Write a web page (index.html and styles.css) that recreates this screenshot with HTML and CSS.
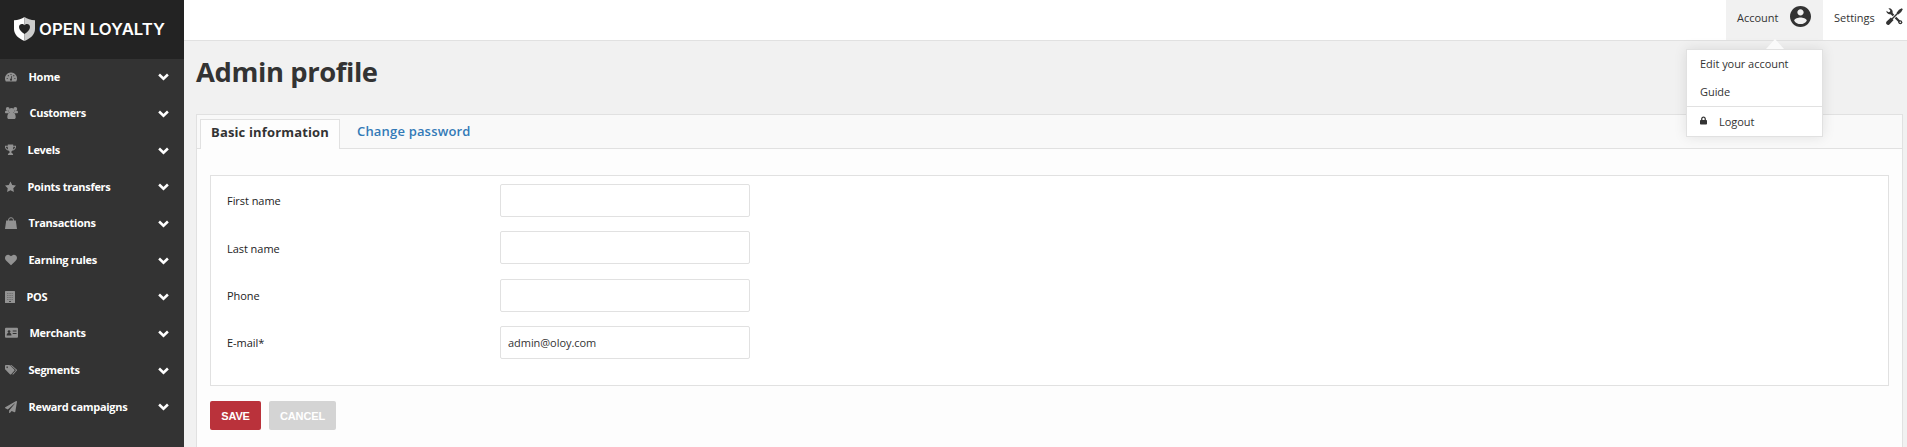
FILE: index.html
```html
<!DOCTYPE html>
<html lang="en">
<head>
<meta charset="utf-8">
<title>Open Loyalty</title>
<link rel="stylesheet" href="styles.css">
</head>
<body>
<svg class="defs" width="0" height="0">
  <symbol id="chev" viewBox="0 0 10 7"><path d="M1 1.2 5 5.1 9 1.2" fill="none" stroke="#fff" stroke-width="2.3"/></symbol>
</svg>
<div class="app">
  <aside class="sidebar">
    <div class="brand">
      <svg class="shield" viewBox="0 0 21 24"><path d="M10.5 0C8 2 4 3 0 3.200V12c0 5.500 4.500 9.500 10.500 12z" fill="#fff"/><path d="M10.500 0C13 2 17 3 21 3.200V12c0 5.500-4.500 9.500-10.500 12z" fill="#ccc"/><path d="M10.500 17C7.500 14.800 5 12.600 5 9.900 5 6.700 8.900 5.900 10.500 8.300c1.600-2.400 5.500-1.600 5.500 1.600 0 2.700-2.500 4.900-5.500 7.100z" fill="#232323"/></svg>
      <svg class="wordmark" viewBox="0 0 130 22"><text x="0" y="17" textLength="126" lengthAdjust="spacingAndGlyphs">OPEN LOYALTY</text></svg>
    </div>
    <nav class="nav">
      <a class="item"><svg class="ico w12" viewBox="0 0 12 10"><path d="M6 .5a6 6 0 0 0-5.200 9h10.400A6 6 0 0 0 6 .5z"/><g fill="#333"><circle cx="2.200" cy="6.500" r=".6"/><circle cx="3.300" cy="3.700" r=".6"/><circle cx="6" cy="2.500" r=".6"/><circle cx="8.800" cy="3.700" r=".6"/><circle cx="9.900" cy="6.500" r=".6"/><circle cx="6" cy="7.700" r="1"/><path d="M5.500 7.500 6.500 3.800l.6.200-.6 3.800z"/></g></svg><span>Home</span><svg class="chev"><use href="#chev"/></svg></a>
      <a class="item"><svg class="ico w13" viewBox="0 0 13 12"><circle cx="2.700" cy="2" r="1.900"/><circle cx="10.300" cy="2" r="1.900"/><circle cx="6.500" cy="3.700" r="2.700"/><path d="M0 5.200C0 4 .8 3.600 1.700 3.900c.8.300 1.500.2 2-.1 0 1 .1 1.600.7 2.400H.9C.4 6.200 0 5.900 0 5.200zM13 5.200c0-1.200-.8-1.600-1.700-1.300-.8.300-1.500.2-2-.1 0 1-.1 1.600-.7 2.400h3.500c.5 0 .9-.3.900-1zM2.300 10.200c0-2 .6-3.800 2-4.200h4.400c1.400.4 2 2.200 2 4.200 0 1-.6 1.800-1.600 1.800H3.900c-1 0-1.600-.8-1.600-1.800z"/></svg><span>Customers</span><svg class="chev"><use href="#chev"/></svg></a>
      <a class="item"><svg class="ico w11" viewBox="0 0 11 11"><path fill-rule="evenodd" d="M2.800 0h5.400v1.300H11v1.200c0 1.700-1.700 3.300-3.500 3.600-.6.700-1.200.9-1.200 1.600 0 .8 1.800.8 1.800 2.300v.5H2.900V10c0-1.500 1.800-1.500 1.800-2.300 0-.7-.6-.9-1.200-1.600C1.700 5.800 0 4.200 0 2.500V1.300h2.800zM.9 2.200c0 1.200.9 2.200 2.200 2.700-.3-.8-.4-1.700-.4-2.700zm9.200 0H8.300c0 1-.1 1.900-.4 2.700 1.300-.5 2.200-1.500 2.200-2.700z"/></svg><span>Levels</span><svg class="chev"><use href="#chev"/></svg></a>
      <a class="item"><svg class="ico w11" viewBox="0 0 11 11"><path d="M5.500 0 7.200 3.500l3.800.6-2.700 2.700.6 3.800-3.400-1.800-3.400 1.800.6-3.800L0 4.100l3.800-.6z"/></svg><span>Points transfers</span><svg class="chev"><use href="#chev"/></svg></a>
      <a class="item"><svg class="ico w12" viewBox="0 0 12 12"><path d="M1.200 3.500h9.600L12 12H0z"/><path d="M3.500 5.500V3.200a2.500 2.500 0 0 1 5 0v2.300" fill="none" stroke="#929292" stroke-width="1"/></svg><span>Transactions</span><svg class="chev"><use href="#chev"/></svg></a>
      <a class="item"><svg class="ico w12" viewBox="0 128 1792 1536"><path d="M896 1664q-26 0-44-18l-624-602q-10-8-27.500-26t-55.500-65.500-68-97.500-53.500-121-23.500-138q0-220 127-344t351-124q62 0 126.500 21.500t120 58 95.500 68.500 76 68q36-36 76-68t95.500-68.500 120-58 126.500-21.500q224 0 351 124t127 344q0 221-229 450l-623 600q-18 18-44 18z"/></svg><span>Earning rules</span><svg class="chev"><use href="#chev"/></svg></a>
      <a class="item"><svg class="ico w10" viewBox="0 0 10 12"><path d="M.5 0h9q.5 0 .5.500v11q0 .5-.5.500h-9Q0 12 0 11.500V.5Q0 0 .5 0z"/><path d="M2 2.500h6M2 4.500h6M2 6.500h6M2 8.500h6" stroke="#5a5a5a" stroke-width=".6" stroke-dasharray="1.100 .5"/><path d="M4 9.900h2V11H4z" fill="#444"/></svg><span>POS</span><svg class="chev"><use href="#chev"/></svg></a>
      <a class="item"><svg class="ico w13" viewBox="0 0 13.500 11"><rect width="13.500" height="10.500" rx="1"/><g fill="#333"><circle cx="4.200" cy="4" r="1.400"/><path d="M1.700 8c0-1.600.8-2.700 2.500-2.700S6.700 6.400 6.700 8z"/><path d="M8 3h4v1H8zM8 5.500h4v1H8z"/></g></svg><span>Merchants</span><svg class="chev"><use href="#chev"/></svg></a>
      <a class="item"><svg class="ico w12" viewBox="0 0 12.500 11"><path fill-rule="evenodd" d="M0 1.200Q0 .3.900.3h3.300c.5 0 1.100.3 1.500.7l4 4c.5.500.5.900 0 1.400L6.500 9.800c-.5.500-.9.500-1.400 0l-4.300-4.200C.3 5.200 0 4.600 0 4.100zm2.200.6a.8.800 0 1 0 .1 0z"/><path d="M5.300.3h.8c.5 0 1.100.3 1.500.7l4.500 4c.5.500.5.900 0 1.400L8.900 9.800c-.4.400-.8.500-1.300.1l3-3c.7-.7.700-1.500 0-2.200z"/></svg><span>Segments</span><svg class="chev"><use href="#chev"/></svg></a>
      <a class="item"><svg class="ico w12" viewBox="0 0 512 512"><path d="M476 3.200L12.500 270.600c-18.100 10.400-15.800 35.600 2.200 43.200L121 358.400l287.300-253.200c5.500-4.900 13.300 2.600 8.600 8.300L176 407v80.500c0 23.600 28.500 32.900 42.500 15.800L282 426l124.600 52.200c14.200 6 30.400-2.900 33-18.200l72-432C515 7.800 493.300-6.800 476 3.200z"/></svg><span>Reward campaigns</span><svg class="chev"><use href="#chev"/></svg></a>
    </nav>
  </aside>
  <div class="main">
    <header class="topbar">
      <div class="account"><span>Account</span>
        <svg class="avatar" viewBox="2 2 20 20"><path d="M12 2C6.480 2 2 6.480 2 12s4.480 10 10 10 10-4.480 10-10S17.520 2 12 2zm0 3c1.660 0 3 1.340 3 3s-1.340 3-3 3-3-1.340-3-3 1.340-3 3-3zm0 14.200c-2.500 0-4.710-1.280-6-3.220.03-1.990 4-3.080 6-3.080 1.990 0 5.970 1.090 6 3.080-1.290 1.940-3.500 3.220-6 3.220z"/></svg>
        <div class="menu">
          <svg class="arrow" viewBox="0 0 18 10"><path d="M0 10 9 0l9 10z"/></svg>
          <a>Edit your account</a>
          <a>Guide</a>
          <a class="logout"><svg class="lock" viewBox="0 0 448 512"><path d="M400 224h-24v-72C376 68.200 307.800 0 224 0S72 68.200 72 152v72H48c-26.500 0-48 21.500-48 48v192c0 26.500 21.500 48 48 48h352c26.500 0 48-21.500 48-48V272c0-26.500-21.500-48-48-48zm-104 0H152v-72c0-39.700 32.300-72 72-72s72 32.300 72 72v72z"/></svg>Logout</a>
        </div>
      </div>
      <div class="settings"><span>Settings</span>
        <svg class="tools" viewBox="0 0 17 17"><path d="M4.500 4.500 14.200 14.200" stroke="#333" stroke-width="2.300" stroke-linecap="round"/><path d="M2.400.3A3.700 3.700 0 0 1 6.300 5.500 3.700 3.700 0 0 1 .3 2.700L2.500 4.300 4.100 3.900 4.300 2.400z" fill="#333"/><circle cx="14.300" cy="14.300" r="2" fill="#333"/><circle cx="14.300" cy="14.300" r=".8" fill="#fff"/><path d="M12.500 4.500 6 11" stroke="#fff" stroke-width="3"/><path d="M12.500 4.500 6 11" stroke="#333" stroke-width="1.500"/><path d="M10.600 4.700 13 1.800 15.800.2 16.800 1.200 15.200 4 12.300 6.400zM4.900 9.400 7.600 12.100 3.400 16.400Q1.900 17.500.7 16.300T.6 13.600z" fill="#333"/></svg>
      </div>
    </header>
    <main class="content">
      <h1>Admin profile</h1>
      <section class="panel">
        <div class="tabs"><a class="tab active">Basic information</a><a class="tab link">Change password</a></div>
        <div class="body">
          <div class="fields">
            <label class="row"><span>First name</span><input type="text"></label>
            <label class="row"><span>Last name</span><input type="text"></label>
            <label class="row"><span>Phone</span><input type="text"></label>
            <label class="row"><span>E-mail*</span><input type="text" value="admin@oloy.com"></label>
          </div>
          <div class="actions"><button class="save">SAVE</button><button class="cancel">CANCEL</button></div>
        </div>
      </section>
    </main>
  </div>
</div>
</body>
</html>
```
FILE: styles.css
```css
* { box-sizing: border-box; }
body { margin: 0; height: 447px; overflow: hidden; background: #f1f1f1; color: #333; font: 11px/16px "Open Sans", sans-serif; }
.defs { position: absolute; }
.app { display: flex; height: 447px; }
.sidebar { width: 184px; flex: none; background: #333; }
.brand { height: 59px; background: #232323; display: flex; align-items: center; padding: 0 0 1px 14px; }
.shield { width: 21px; height: 24px; }
.wordmark { width: 130px; height: 22px; margin-left: 4px; }
.wordmark text { font: 600 16px Inter, sans-serif; fill: #fff; }
.nav { display: flex; flex-direction: column; }
.item { height: 36.67px; display: flex; align-items: center; padding: 0 15px 1px 5px; color: #fff; font-weight: 700; }
.item span { margin-left: 11.5px; flex: 1; letter-spacing: -.3px; }
.ico { height: 12px; fill: #929292; }
.w10 { width: 10px; } .w11 { width: 11px; } .w12 { width: 12px; } .w13 { width: 13px; }
.chev { width: 11px; height: 8px; margin-top: 1px; }
.main { flex: 1; min-width: 0; }
.topbar { height: 41px; background: #fff; border-bottom: 1px solid #e1e1e1; display: flex; justify-content: flex-end; }
.account { position: relative; width: 97px; background: #f1f1f1; padding: 0 12px 4px 11px; display: flex; align-items: center; justify-content: space-between; }
.avatar { width: 21px; height: 21px; fill: #333; margin-top: -3px; }
.settings { width: 84px; padding: 0 4px 4px 11px; display: flex; align-items: center; justify-content: space-between; }
.tools { width: 17px; height: 17px; margin-top: -3px; }
.menu { position: absolute; z-index: 2; right: 0; top: 49px; width: 137px; height: 88px; background: #fff; border: 1px solid #e1e1e1; box-shadow: 0 0 12px rgba(0,0,0,.1); display: flex; flex-direction: column; }
.menu a { height: 28px; padding: 6px 13px 0; letter-spacing: -.05px; }
.menu .logout { height: 30px; margin-top: 1px; border-top: 1px solid #e1e1e1; display: flex; align-items: center; padding: 0 13px; }
.lock { width: 7px; height: 9px; fill: #333; margin: -3px 12px 0 0; }
.arrow { position: absolute; left: 79px; top: -11px; width: 18px; height: 10px; fill: #fafafa; }
.content { padding: 0 4px 0 12px; }
h1 { margin: 0; height: 73px; padding-top: 11px; font-size: 27.4px; line-height: 40px; font-weight: 700; letter-spacing: -.4px; }
.panel { height: 340px; border: 1px solid #e1e1e1; background: #fdfdfd; }
.tabs { height: 34px; background: #f9f9f9; border-bottom: 1px solid #e1e1e1; padding: 4px 0 0 3px; display: flex; font-size: 13px; font-weight: 600; }
.tab.active { height: 30px; width: 140px; background: #fdfdfd; border: 1px solid #e1e1e1; border-bottom: 0; padding: 4px 0 0 10px; font-weight: 700; letter-spacing: .15px; white-space: nowrap; }
.tab.link { color: #337ab7; padding: 4px 0 0 17px; letter-spacing: .18px; }
.body { padding: 26px 13px 0; }
.fields { height: 211px; border: 1px solid #e1e1e1; background: #fff; padding: 8px 16px; }
.row { display: flex; align-items: center; height: 33px; margin-bottom: 14.33px; color: #222; }
.row span { width: 273px; padding-top: 1.4px; letter-spacing: -.05px; }
input { width: 250px; height: 33px; border: 1px solid #e1e1e1; border-radius: 2px; background: #fff; padding: 1px 7px 0; color: #333; font: 11px "Open Sans", sans-serif; letter-spacing: -.05px; }
.actions { margin-top: 15px; display: flex; gap: 8px; }
button { height: 29px; border: 0; border-radius: 2px; padding: 1px 0 0; color: #fff; font: 700 11px "Liberation Sans", Arial, sans-serif; letter-spacing: -.15px; }
.save { width: 51px; background: #ba323b; }
.cancel { width: 67px; background: #d4d4d4; }
```
